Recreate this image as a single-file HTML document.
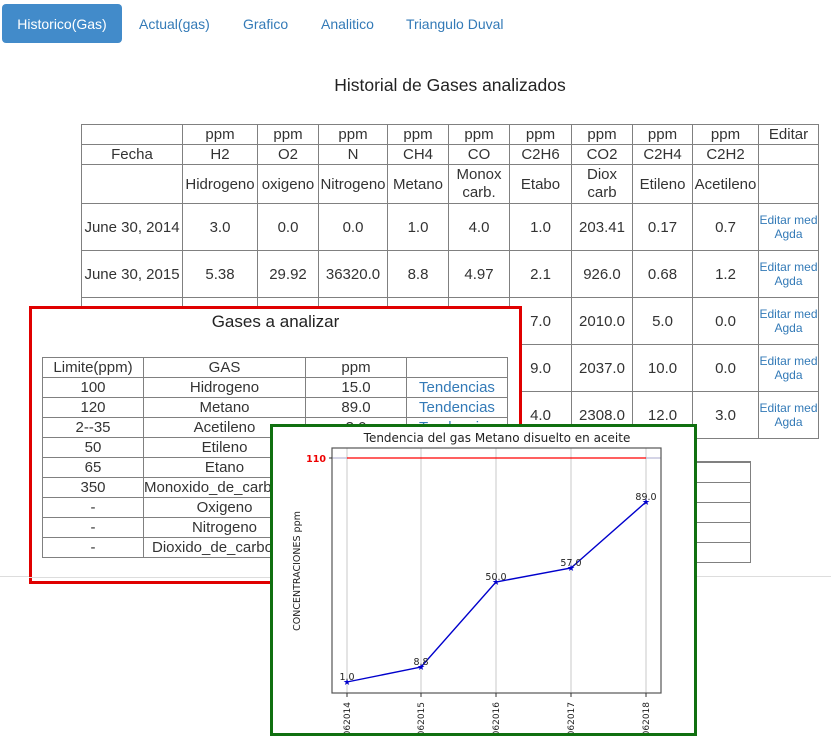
<!DOCTYPE html>
<html><head><meta charset="utf-8">
<style>
body{margin:0;width:831px;height:751px;background:#fff;position:relative;overflow:hidden;font-family:"Liberation Sans",Arial,sans-serif;color:#333}
.nav{position:absolute;top:5px;height:39px;line-height:39px;font-size:14px;color:#337ab7}
.btn{left:2px;top:4px;width:120px;background:#428bca;color:#fff;border-radius:4px;text-align:center;line-height:41px}
table{border-collapse:collapse;table-layout:fixed;position:absolute}
td{border:1px solid #808080;text-align:center;padding:0;overflow:hidden;white-space:nowrap}
#main{left:81px;top:124px;font-size:15px;color:#333}
#main td.e{font-size:12px;color:#337ab7;line-height:14px;white-space:normal}
#g{left:42px;top:357px;font-size:15px}
#g td{height:19px;line-height:19px}
a{color:#337ab7}
</style></head><body>
<div class="nav btn">Historico(Gas)</div>
<div class="nav" style="left:139px">Actual(gas)</div>
<div class="nav" style="left:243px">Grafico</div>
<div class="nav" style="left:321px">Analitico</div>
<div class="nav" style="left:406px">Triangulo Duval</div>
<div style="position:absolute;left:0;width:900px;top:75px;text-align:center;font-size:17.5px;color:#222">Historial de Gases analizados</div>

<table id="main">
<colgroup><col style="width:101px"><col style="width:75px"><col style="width:61px"><col style="width:69px"><col style="width:61px"><col style="width:61px"><col style="width:62px"><col style="width:61px"><col style="width:60px"><col style="width:66px"><col style="width:60px"></colgroup>
<tr style="height:20px"><td></td><td>ppm</td><td>ppm</td><td>ppm</td><td>ppm</td><td>ppm</td><td>ppm</td><td>ppm</td><td>ppm</td><td>ppm</td><td>Editar</td></tr>
<tr style="height:20px"><td>Fecha</td><td>H2</td><td>O2</td><td>N</td><td>CH4</td><td>CO</td><td>C2H6</td><td>CO2</td><td>C2H4</td><td>C2H2</td><td></td></tr>
<tr style="height:39px"><td></td><td>Hidrogeno</td><td>oxigeno</td><td>Nitrogeno</td><td>Metano</td><td style="line-height:18px">Monox<br>carb.</td><td>Etabo</td><td style="line-height:18px">Diox<br>carb</td><td>Etileno</td><td>Acetileno</td><td></td></tr>
<tr style="height:47px"><td>June 30, 2014</td><td>3.0</td><td>0.0</td><td>0.0</td><td>1.0</td><td>4.0</td><td>1.0</td><td>203.41</td><td>0.17</td><td>0.7</td><td class="e">Editar med Agda</td></tr>
<tr style="height:47px"><td>June 30, 2015</td><td>5.38</td><td>29.92</td><td>36320.0</td><td>8.8</td><td>4.97</td><td>2.1</td><td>926.0</td><td>0.68</td><td>1.2</td><td class="e">Editar med Agda</td></tr>
<tr style="height:47px"><td>June 30, 2016</td><td>15.0</td><td>0.0</td><td>0.0</td><td>50.0</td><td>7.0</td><td>7.0</td><td>2010.0</td><td>5.0</td><td>0.0</td><td class="e">Editar med Agda</td></tr>
<tr style="height:47px"><td>June 30, 2017</td><td>15.0</td><td>0.0</td><td>0.0</td><td>57.0</td><td>9.0</td><td>9.0</td><td>2037.0</td><td>10.0</td><td>0.0</td><td class="e">Editar med Agda</td></tr>
<tr style="height:47px"><td>June 30, 2018</td><td>15.0</td><td>0.0</td><td>0.0</td><td>89.0</td><td>4.0</td><td>4.0</td><td>2308.0</td><td>12.0</td><td>3.0</td><td class="e">Editar med Agda</td></tr>
</table>

<div style="position:absolute;left:0;top:576px;width:831px;height:1px;background:#ddd"></div>
<table style="left:650px;top:461px">
<colgroup><col style="width:100px"></colgroup>
<tr style="height:20px"><td style="border-top:2px solid #808080"></td></tr><tr style="height:20px"><td></td></tr><tr style="height:20px"><td></td></tr><tr style="height:20px"><td></td></tr><tr style="height:20px"><td></td></tr>
</table>

<div style="position:absolute;left:29px;top:306px;width:487px;height:272px;border:3px solid #e00000;background:#fff">
<div style="position:absolute;left:0;width:487px;top:3px;text-align:center;font-size:17px;color:#222">Gases a analizar</div>
<div style="position:absolute;left:-3px;top:268px;width:490px;height:1px;background:#ddd"></div>
</div>
<table id="g">
<colgroup><col style="width:101px"><col style="width:162px"><col style="width:101px"><col style="width:101px"></colgroup>
<tr><td>Limite(ppm)</td><td>GAS</td><td>ppm</td><td></td></tr>
<tr><td>100</td><td>Hidrogeno</td><td>15.0</td><td><a>Tendencias</a></td></tr>
<tr><td>120</td><td>Metano</td><td>89.0</td><td><a>Tendencias</a></td></tr>
<tr><td>2--35</td><td>Acetileno</td><td>3.0</td><td><a>Tendencias</a></td></tr>
<tr><td>50</td><td>Etileno</td><td>12.0</td><td><a>Tendencias</a></td></tr>
<tr><td>65</td><td>Etano</td><td>4.0</td><td><a>Tendencias</a></td></tr>
<tr><td>350</td><td style="text-align:left">Monoxido_de_carbono</td><td>4.0</td><td><a>Tendencias</a></td></tr>
<tr><td>-</td><td>Oxigeno</td><td>0.0</td><td><a>Tendencias</a></td></tr>
<tr><td>-</td><td>Nitrogeno</td><td>0.0</td><td><a>Tendencias</a></td></tr>
<tr><td>-</td><td style="text-align:left;padding-left:8px">Dioxido_de_carbono</td><td>2308.0</td><td><a>Tendencias</a></td></tr>
</table>

<div style="position:absolute;left:270px;top:424px;width:421px;height:306px;border:3px solid #107010;background:#fff;overflow:hidden">
<svg width="421" height="306" viewBox="273 427 421 306" style="display:block" font-family="DejaVu Sans, sans-serif">
<text x="497" y="442" font-size="12" text-anchor="middle" fill="#222">Tendencia del gas Metano disuelto en aceite</text>
<g stroke="#c8c8c8" stroke-width="1">
<line x1="347" y1="448" x2="347" y2="693"/><line x1="421" y1="448" x2="421" y2="693"/><line x1="496" y1="448" x2="496" y2="693"/><line x1="571" y1="448" x2="571" y2="693"/><line x1="646" y1="448" x2="646" y2="693"/>
<line x1="332" y1="458" x2="661" y2="458" stroke="#aac"/>
</g>
<rect x="332" y="448" width="329" height="245" fill="none" stroke="#555" stroke-width="1.2"/>
<line x1="347" y1="458" x2="646" y2="458" stroke="#f00" stroke-width="1.3"/>
<line x1="329" y1="458" x2="332" y2="458" stroke="#333"/>
<text x="326" y="462" font-size="9.5" font-weight="bold" text-anchor="end" fill="#e00">110</text>
<g stroke="#333"><line x1="347" y1="693" x2="347" y2="697"/><line x1="421" y1="693" x2="421" y2="697"/><line x1="496" y1="693" x2="496" y2="697"/><line x1="571" y1="693" x2="571" y2="697"/><line x1="646" y1="693" x2="646" y2="697"/></g>
<polyline points="347,682 421,667 496,582 571,568 646,502" fill="none" stroke="#00c" stroke-width="1.4"/>
<g fill="#00c" font-size="9"><text x="343" y="685">★</text><text x="417" y="670">★</text><text x="492" y="585">★</text><text x="567" y="571">★</text><text x="642" y="505">★</text></g>
<g font-size="9.5" fill="#222" text-anchor="middle"><text x="347" y="680">1.0</text><text x="421" y="665">8.8</text><text x="496" y="580">50.0</text><text x="571" y="566">57.0</text><text x="646" y="500">89.0</text></g>
<text transform="translate(300,571) rotate(-90)" font-size="9.5" text-anchor="middle" fill="#222">CONCENTRACIONES ppm</text>
<g font-size="9" fill="#222" text-anchor="end">
<text transform="translate(350,702) rotate(-90)">062014</text>
<text transform="translate(424,702) rotate(-90)">062015</text>
<text transform="translate(499,702) rotate(-90)">062016</text>
<text transform="translate(574,702) rotate(-90)">062017</text>
<text transform="translate(649,702) rotate(-90)">062018</text>
</g>
</svg>
</div>
</body></html>
